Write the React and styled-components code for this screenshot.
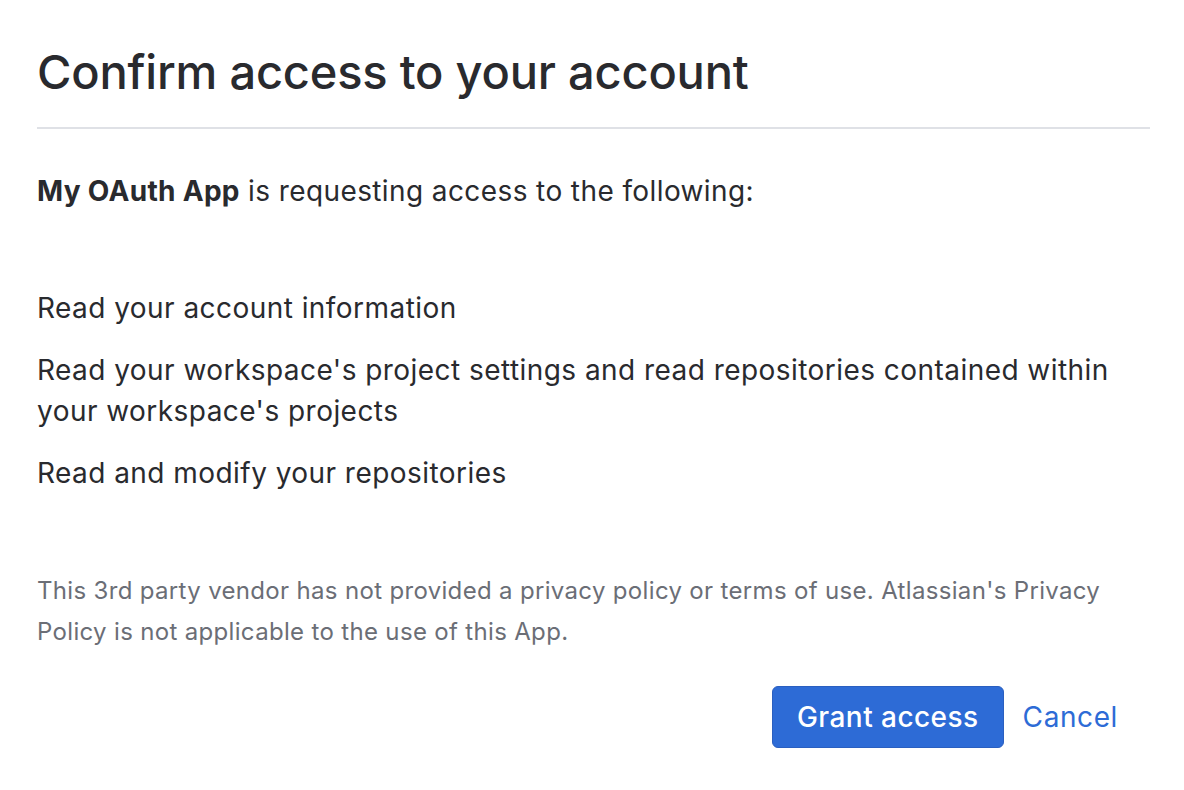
import React from "react";
import styled, { createGlobalStyle } from "styled-components";

const Global = createGlobalStyle`
  html, body { margin: 0; padding: 0; background: #ffffff; }
  body { font-family: Inter, "Noto Sans", sans-serif; color: #292a2e; }
`;

const Page = styled.main`
  display: flex;
  flex-direction: column;
  padding: 43px 34px 0 37px;
`;

const Title = styled.h1`
  margin: 0;
  font-size: 47px;
  line-height: 58px;
  font-weight: 500;
  letter-spacing: -0.2px;
  color: #292a2e;
  padding-bottom: 26px;
  border-bottom: 2px solid #dfe1e6;
`;

const Intro = styled.p`
  margin: 42px 0 0;
  font-size: 28px;
  line-height: 41px;
  letter-spacing: 0.4px;
  color: #292a2e;
  strong { font-weight: 700; letter-spacing: 0.3px; }
`;

const ScopeList = styled.ul`
  list-style: none;
  margin: 76px 0 0;
  padding: 0;
  display: flex;
  flex-direction: column;
  gap: 21px;
`;

const Scope = styled.li`
  font-size: 28px;
  line-height: 41px;
  letter-spacing: 0.45px;
  color: #292a2e;
`;

const Notice = styled.p`
  margin: 76px 0 0;
  font-size: 24px;
  line-height: 41px;
  letter-spacing: 0.33px;
  color: #6b6e76;
`;

const Actions = styled.div`
  display: flex;
  justify-content: flex-end;
  align-items: center;
  gap: 19px;
  margin-top: 34px;
`;

const PrimaryButton = styled.button`
  font-family: inherit;
  font-size: 28px;
  font-weight: 500;
  letter-spacing: 0.45px;
  color: #ffffff;
  background: #2d6bd6;
  border: 1px solid #2a5fc0;
  border-radius: 6px;
  height: 62px;
  padding: 0 24px;
  cursor: pointer;
`;

const LinkButton = styled.button`
  font-family: inherit;
  font-size: 28px;
  font-weight: 400;
  letter-spacing: 0.6px;
  color: #2d6bd6;
  background: none;
  border: none;
  padding: 0 32px 0 0;
  cursor: pointer;
`;

export default function App() {
  return (
    <>
      <Global />
      <Page>
        <Title>Confirm access to your account</Title>
        <Intro>
          <strong>My OAuth App</strong> is requesting access to the following:
        </Intro>
        <ScopeList>
          <Scope>Read your account information</Scope>
          <Scope>
            Read your workspace's project settings and read repositories contained within
            your workspace's projects
          </Scope>
          <Scope>Read and modify your repositories</Scope>
        </ScopeList>
        <Notice>
          This 3rd party vendor has not provided a privacy policy or terms of use. Atlassian's
          Privacy Policy is not applicable to the use of this App.
        </Notice>
        <Actions>
          <PrimaryButton>Grant access</PrimaryButton>
          <LinkButton>Cancel</LinkButton>
        </Actions>
      </Page>
    </>
  );
}
